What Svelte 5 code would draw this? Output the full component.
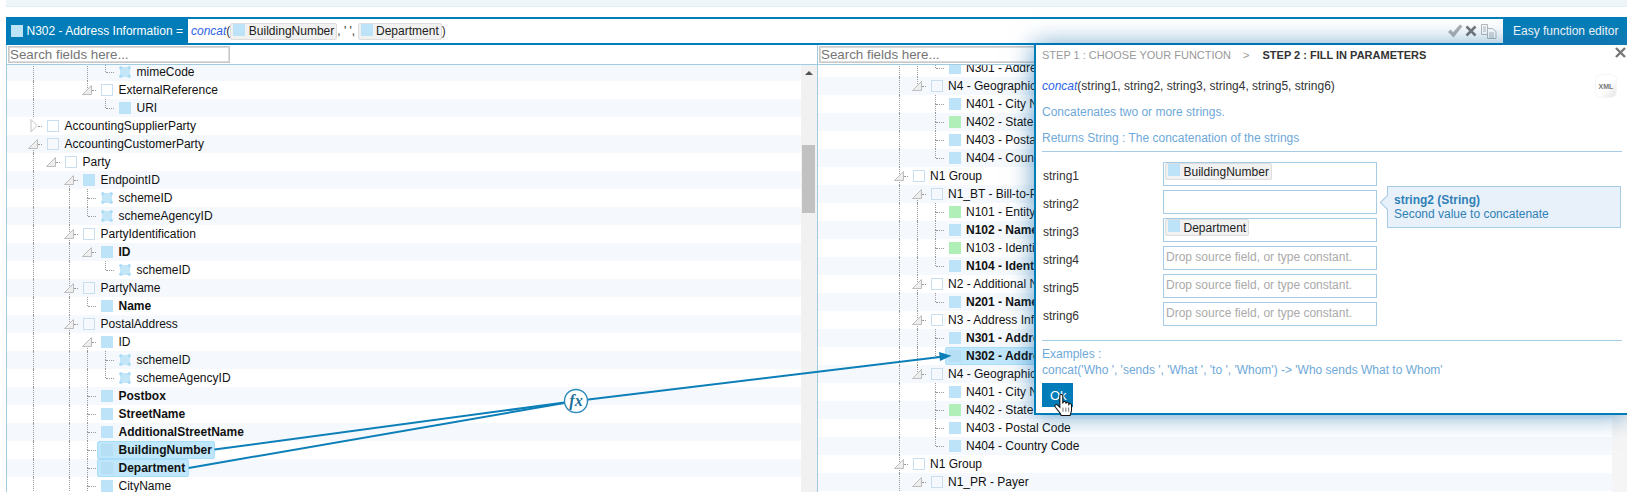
<script lang="ts">
    type Row = { level: number; conn: string; kind: string; label: string; guides: number[]; bold?: boolean; sel?: boolean };

    const n = (level: number, conn: string, kind: string, label: string, guides: number[], flag = ""): Row => ({
        level, conn, kind, label, guides,
        bold: flag.includes("b"),
        sel: flag.includes("s"),
    });

    const leftRows: Row[] = [
        n(4, "e", "a", "mimeCode", [0, 3]),
        n(3, "t", "e", "ExternalReference", [0]),
        n(4, "e", "f", "URI", [0]),
        n(0, "r", "e", "AccountingSupplierParty", []),
        n(0, "t", "e", "AccountingCustomerParty", []),
        n(1, "t", "e", "Party", [0]),
        n(2, "t", "f", "EndpointID", [0]),
        n(3, "c", "a", "schemeID", [0, 2]),
        n(3, "e", "a", "schemeAgencyID", [0, 2]),
        n(2, "t", "e", "PartyIdentification", [0]),
        n(3, "t", "f", "ID", [0, 2], "b"),
        n(4, "e", "a", "schemeID", [0, 2]),
        n(2, "t", "e", "PartyName", [0]),
        n(3, "e", "f", "Name", [0, 2], "b"),
        n(2, "t", "e", "PostalAddress", [0]),
        n(3, "t", "f", "ID", [0, 2]),
        n(4, "c", "a", "schemeID", [0, 2, 3]),
        n(4, "e", "a", "schemeAgencyID", [0, 2, 3]),
        n(3, "c", "f", "Postbox", [0, 2], "b"),
        n(3, "c", "f", "StreetName", [0, 2], "b"),
        n(3, "c", "f", "AdditionalStreetName", [0, 2], "b"),
        n(3, "c", "f", "BuildingNumber", [0, 2], "bs"),
        n(3, "c", "f", "Department", [0, 2], "bs"),
        n(3, "c", "f", "CityName", [0, 2]),
    ];

    const rightRows: Row[] = [
        n(2, "e", "f", "N301 - Address Information", [0, 1]),
        n(1, "t", "e", "N4 - Geographic Location", [0]),
        n(2, "c", "f", "N401 - City Name", [0]),
        n(2, "c", "g", "N402 - State or Province Code", [0]),
        n(2, "c", "f", "N403 - Postal Code", [0]),
        n(2, "e", "f", "N404 - Country Code", [0]),
        n(0, "t", "e", "N1 Group", []),
        n(1, "t", "e", "N1_BT - Bill-to-Party", [0]),
        n(2, "c", "g", "N101 - Entity Identifier Code", [0, 1]),
        n(2, "c", "f", "N102 - Name", [0, 1], "b"),
        n(2, "c", "g", "N103 - Identification Code Qualifier", [0, 1]),
        n(2, "e", "f", "N104 - Identification Code", [0, 1], "b"),
        n(1, "t", "e", "N2 - Additional Name Information", [0]),
        n(2, "e", "f", "N201 - Name", [0, 1], "b"),
        n(1, "t", "e", "N3 - Address Information", [0]),
        n(2, "c", "f", "N301 - Address Information", [0, 1], "b"),
        n(2, "e", "f", "N302 - Address Information", [0, 1], "bs"),
        n(1, "t", "e", "N4 - Geographic Location", [0]),
        n(2, "c", "f", "N401 - City Name", [0]),
        n(2, "c", "g", "N402 - State or Province Code", [0]),
        n(2, "c", "f", "N403 - Postal Code", [0]),
        n(2, "e", "f", "N404 - Country Code", [0]),
        n(0, "t", "e", "N1 Group", []),
        n(1, "t", "e", "N1_PR - Payer", [0]),
    ];

    const params = [
        { name: "string1", token: "BuildingNumber" },
        { name: "string2", token: "", blank: true },
        { name: "string3", token: "Department" },
        { name: "string4", token: "" },
        { name: "string5", token: "" },
        { name: "string6", token: "" },
    ];
</script>

{#snippet square(kind: string)}
    {#if kind === "a"}
        <svg class="sq" width="12" height="12" viewBox="0 0 12 12">
            <rect x="1" y="1" width="10" height="10" fill="#c4e6f9" />
            <circle cx="1.8" cy="1.8" r="1.7" fill="#aedcf5" />
            <circle cx="10.2" cy="1.8" r="1.7" fill="#aedcf5" />
            <circle cx="1.8" cy="10.2" r="1.7" fill="#aedcf5" />
            <circle cx="10.2" cy="10.2" r="1.7" fill="#aedcf5" />
        </svg>
    {:else}
        <span class="sq {kind}"></span>
    {/if}
{/snippet}

{#snippet tree(rows: Row[], tint: number)}
    {#each rows as r, i}
        <div class="row" class:tint={i % 2 === tint}>
            {#each Array(r.level) as _, g}
                <span class="indent" class:guide={r.guides.includes(g)}></span>
            {/each}
            <span
                class="conn {r.conn}"
                class:up={r.conn === "c" || r.conn === "e" || (r.conn === "t" && rows[i - 1]?.guides.includes(r.level))}
                class:down={r.conn === "c" || (r.conn === "t" && rows[i + 1]?.guides.includes(r.level))}
            >
                <span class="dash"></span>
                {#if r.conn === "t"}
                    <svg class="tri" width="11" height="11" viewBox="0 0 11 11">
                        <polygon points="9.5,0.5 9.5,9.5 0.5,9.5" fill="#eeeeee" stroke="#bdbdbd" />
                    </svg>
                {:else if r.conn === "r"}
                    <svg class="tri closed" width="8" height="14" viewBox="0 0 8 14">
                        <polygon points="1,0.5 7,6.5 1,13" fill="#ffffff" stroke="#c4c4c4" />
                    </svg>
                {/if}
            </span>
            <span class="node" class:sel={r.sel}>
                {@render square(r.kind)}
                <span class="label" class:bold={r.bold}>{r.label}</span>
            </span>
        </div>
    {/each}
{/snippet}

<div class="page">
    <div class="strip"></div>

    <div class="bar">
        <div class="title"><span class="sq f"></span>N302 - Address Information =</div>
        <div class="formula">
            <em>concat</em>(<span class="token"><span class="sq f"></span>BuildingNumber</span>, ' ', <span class="token second"><span class="sq f"></span>Department</span>)
        </div>
        <div class="actions">
            <svg class="check" width="16" height="14" viewBox="0 0 16 14">
                <path d="M1 8l2.5-2.5 2.6 2.8L13 .5l2.5 1.8L6.6 13.5z" fill="#b0b0b0" />
            </svg>
            <svg width="12" height="12" viewBox="0 0 12 12">
                <path d="M1.5 1.5l9 9M10.5 1.5l-9 9" stroke="#777777" stroke-width="2.6" fill="none" />
            </svg>
            <svg width="16" height="15" viewBox="0 0 16 15" fill="none" stroke="#b8b8b8">
                <path d="M.5.5h6v10h-6zM2 3h3M2 5h3M2 7h3" />
                <path d="M6.5 4.5h5l3.5 3v7H6.5zM8 9h5M8 11h5M8 13h5" fill="#ffffff" />
            </svg>
        </div>
        <div class="easy">Easy function editor</div>
    </div>

    <div class="panes">
        <section class="pane left">
            <div class="search"><input placeholder="Search fields here..." /></div>
            <div class="body">
                <div class="tree"><div class="rows">{@render tree(leftRows, 0)}</div></div>
                <div class="scroll"><i></i><b></b></div>
            </div>
        </section>
        <section class="pane right">
            <div class="search"><input placeholder="Search fields here..." /></div>
            <div class="body">
                <div class="tree"><div class="rows">{@render tree(rightRows, 1)}</div></div>
                <div class="scroll plain"></div>
            </div>
        </section>
    </div>

    <svg class="links" width="1627" height="492" viewBox="0 0 1627 492">
        <g fill="none" stroke="#0d7fb8" stroke-width="2">
            <line x1="214.5" y1="449.5" x2="576" y2="401" />
            <line x1="188.7" y1="468" x2="576" y2="401" />
            <line x1="576" y1="401" x2="942" y2="356.8" />
        </g>
        <polygon points="951.5,355.7 939,352 940,361" fill="#0d7fb8" />
        <circle cx="576" cy="401" r="11.5" fill="#ffffff" stroke="#2d8ab8" stroke-width="1.4" />
        <text x="576" y="406" text-anchor="middle" class="fx">fx</text>
    </svg>

    <div class="popup">
        <div class="steps">
            <span class="off">STEP 1 : CHOOSE YOUR FUNCTION</span>
            <span class="off sep">&gt;</span>
            <span class="on">STEP 2 : FILL IN PARAMETERS</span>
        </div>
        <svg class="close" width="11" height="11" viewBox="0 0 11 11">
            <path d="M1 1l9 9M10 1l-9 9" stroke="#777777" stroke-width="2.4" fill="none" />
        </svg>
        <div class="sig">
            <span><em>concat</em>(string1, string2, string3, string4, string5, string6)</span>
            <span class="xml">XML</span>
        </div>
        <p class="desc">Concatenates two or more strings.</p>
        <p class="desc">Returns String : The concatenation of the strings</p>
        <hr />
        <div class="params">
            {#each params as p}
                <label for={p.name}>{p.name}</label>
                <div class="box" id={p.name}>
                    {#if p.token}
                        <span class="token"><span class="sq f"></span>{p.token}</span>
                    {:else if !p.blank}
                        <span class="hint">Drop source field, or type constant.</span>
                    {/if}
                </div>
            {/each}
        </div>
        <hr class="low" />
        <p class="ex first">Examples :</p>
        <p class="ex">concat('Who ', 'sends ', 'What ', 'to ', 'Whom') -&gt; 'Who sends What to Whom'</p>
        <button class="ok">Ok</button>

        <div class="tip">
            <strong>string2 (String)</strong>
            <span>Second value to concatenate</span>
        </div>

        <svg class="hand" width="21" height="25" viewBox="0 0 20 24">
            <path
                d="M6.5 2.5c0-1.4 2.8-1.4 2.8 0v7.5l.3-1c.3-1.2 2.6-1.1 2.7.2v1l.2-.6c.4-1 2.5-.8 2.6.4v1l.2-.3c.5-.9 2.4-.6 2.4.7v4.8c0 2.2-1 3-1.3 5.3H7.8c-.6-2-3-4.5-5.6-7.8-1.4-1.9.7-3.4 2.2-2l2.1 2z"
                fill="#ffffff" stroke="#111111" stroke-width="1"
            />
            <path d="M9.5 14v4M12.3 14v4M15 14v4" stroke="#555555" stroke-width=".8" />
        </svg>
    </div>
</div>

<style>
    :global(body) {
        margin: 0;
    }

    .page {
        position: relative;
        width: 1627px;
        height: 492px;
        overflow: hidden;
        background: #fff;
        padding-left: 6px;
        box-sizing: border-box;
        font-family: "Liberation Sans", Arial, sans-serif;
        font-size: 12px;
        color: #222;
    }

    .strip {
        height: 6px;
        background: #eef5f9;
        border-bottom: 1px solid #e2eff7;
        margin-bottom: 10px;
    }

    /* formula bar */
    .bar {
        display: flex;
        height: 28px;
        box-sizing: border-box;
        border-top: 2px solid #007db8;
        border-bottom: 2px solid #007db8;
    }

    .sq {
        display: block;
        flex: none;
        width: 12px;
        height: 12px;
        box-sizing: border-box;
    }
    .sq.f {
        background: #bde3f8;
    }
    .sq.g {
        background: #b0efb8;
    }
    .sq.e {
        border: 1px solid #c9deee;
    }

    .title {
        display: flex;
        align-items: center;
        gap: 3.5px;
        width: 182px;
        padding-left: 5px;
        box-sizing: border-box;
        background: #007db8;
        color: #fff;
    }

    .formula {
        flex: 1;
        display: flex;
        align-items: center;
        padding-left: 3px;
        white-space: pre;
        color: #333;
    }
    em {
        color: #2a63e6;
        font-style: italic;
    }

    .token {
        display: inline-flex;
        align-items: center;
        gap: 3.5px;
        height: 17px;
        padding: 0 2px 0 2px;
        box-sizing: border-box;
        background: #f1f1f1;
        border: 1px solid #dddddd;
        border-radius: 2px;
        color: #222;
    }
    .token .sq {
        margin-top: -3px;
    }
    .token.second {
        margin-left: -1px;
    }

    .actions {
        display: flex;
        align-items: center;
        gap: 4px;
        padding-right: 6px;
    }
    .check {
        margin-right: -2px;
    }

    .easy {
        display: flex;
        align-items: center;
        width: 124px;
        padding-left: 10px;
        box-sizing: border-box;
        margin: -2px 0;
        background: linear-gradient(#007db8, #167fb6);
        color: #fff;
    }

    /* source and target trees */
    .panes {
        display: flex;
        height: 447px;
    }

    .pane {
        display: flex;
        flex-direction: column;
        box-sizing: border-box;
    }
    .pane.left {
        width: 812px;
        border-left: 1px solid #a0cbe0;
        border-right: 1px solid #a0cbe0;
    }
    .pane.right {
        flex: 1;
    }

    .search {
        height: 20px;
        box-sizing: border-box;
        padding: 1px 0 0 1px;
        border-bottom: 1px solid #a0cbe0;
    }
    .search input {
        display: block;
        width: 222px;
        height: 17px;
        box-sizing: border-box;
        padding: 0 1px;
        border: 1px solid #c8c8c8;
        outline: 1px solid #dcdcdc;
        outline-offset: -2px;
        font-family: inherit;
        font-size: 13.33px;
    }

    .body {
        flex: 1;
        display: flex;
        min-height: 0;
    }
    .tree {
        flex: 1;
        overflow: hidden;
    }
    .left .rows {
        margin-top: -2px;
    }
    .right .rows {
        margin-top: -6px;
    }

    .scroll {
        width: 16px;
        position: relative;
        background: #f1f1f1;
    }
    .scroll.plain {
        width: 15px;
        background: #f5f5f5;
    }
    .scroll i {
        position: absolute;
        left: 4px;
        top: 6px;
        border: 4px solid transparent;
        border-top: 0;
        border-bottom: 4px solid #505050;
    }
    .scroll b {
        position: absolute;
        left: 1px;
        top: 80px;
        width: 13px;
        height: 68px;
        background: #c1c1c1;
    }

    .row {
        display: flex;
        align-items: center;
        height: 18px;
        padding-left: 26px;
        white-space: nowrap;
        color: #111;
    }
    .right .row {
        padding-left: 80.5px;
    }
    .row.tint {
        background: #f5f9fd;
    }

    .indent {
        flex: none;
        width: 18px;
        height: 18px;
        box-sizing: border-box;
    }
    .indent.guide {
        border-left: 1px dotted #999;
    }

    .conn {
        flex: none;
        position: relative;
        width: 14px;
        height: 18px;
    }
    .conn.up::before,
    .conn.down::after {
        content: "";
        position: absolute;
        left: 0;
        height: 9px;
        border-left: 1px dotted #999;
    }
    .conn.up::before {
        top: 0;
    }
    .conn.down::after {
        bottom: 0;
    }
    .dash {
        position: absolute;
        left: 1px;
        top: 9px;
        width: 8px;
        border-top: 1px dotted #999;
    }
    .conn.t .dash,
    .conn.r .dash {
        left: 5px;
        width: 4px;
    }
    .tri {
        position: absolute;
        left: -5px;
        top: 4px;
        z-index: 1;
    }
    .tri.closed {
        left: -3px;
        top: 2px;
    }

    .node {
        display: inline-flex;
        align-items: center;
        gap: 5.5px;
        height: 18px;
        margin-left: -4px;
        padding: 0 3.5px 0 4px;
        box-sizing: border-box;
    }
    .node.sel {
        background: #bfe6fb;
        border: 1px solid #a8def8;
        border-radius: 2px;
        padding: 0 2.5px 0 3px;
    }
    .node.sel .sq {
        background: #b6dff6;
    }
    .bold {
        font-weight: bold;
    }

    /* link overlay */
    .links {
        position: absolute;
        left: 0;
        top: 0;
        pointer-events: none;
    }
    .fx {
        font-family: "Liberation Serif", serif;
        font-style: italic;
        font-weight: bold;
        font-size: 16px;
        fill: #1f6f9a;
    }

    /* function editor */
    .popup {
        position: absolute;
        left: 1034px;
        right: 0;
        top: 45px;
        height: 370px;
        box-sizing: border-box;
        padding: 0 5px 0 6px;
        background: #fff;
        border-left: 2px solid #007db8;
        border-bottom: 2px solid #007db8;
        box-shadow: 0 0 24px rgba(0, 95, 165, 0.6);
    }

    .steps {
        display: flex;
        line-height: 20px;
        font-size: 11px;
    }
    .off {
        color: #999;
    }
    .sep {
        margin: 0 13px 0 12px;
    }
    .on {
        color: #333;
        font-weight: bold;
    }

    .close {
        position: absolute;
        right: 1px;
        top: 2px;
    }

    .sig {
        display: flex;
        justify-content: space-between;
        align-items: center;
        height: 20px;
        margin-top: 11px;
        color: #333;
    }
    .xml {
        display: flex;
        align-items: center;
        justify-content: center;
        width: 20px;
        height: 22px;
        margin-right: 6px;
        border-radius: 5px;
        background: linear-gradient(135deg, #fff 55%, #e4e4e4);
        box-shadow: 0 0 2px #ddd;
        font-size: 7px;
        font-weight: bold;
        color: #777;
    }

    p {
        margin: 0;
    }
    .desc {
        margin-top: 6px;
        line-height: 20px;
        color: #6fa9d8;
    }

    hr {
        height: 1px;
        margin: 3px 0 0;
        border: 0;
        background: #a5cbe5;
    }
    hr.low {
        margin-top: 14px;
    }

    .params {
        display: grid;
        grid-template-columns: 121px 214px;
        grid-auto-rows: 24px;
        row-gap: 4px;
        margin-top: 10px;
    }
    label {
        padding: 2px 0 0 1px;
        line-height: 24px;
        color: #333;
    }
    .box {
        display: flex;
        align-items: flex-start;
        box-sizing: border-box;
        padding: 0 1px;
        border: 1px solid #a5cbe5;
    }
    .hint {
        line-height: 20px;
        padding-left: 1px;
        color: #aaa;
    }

    .ex {
        line-height: 16px;
        color: #6fa9d8;
    }
    .ex.first {
        margin-top: 5px;
    }

    .ok {
        display: block;
        width: 31px;
        height: 24px;
        margin-top: 5px;
        padding: 0 0 0 8px;
        border: 0;
        background: #007db8;
        color: #fff;
        font-family: inherit;
        font-size: 13px;
        text-align: left;
    }

    .tip {
        position: absolute;
        left: 351px;
        top: 141px;
        width: 234px;
        height: 42px;
        box-sizing: border-box;
        padding: 6px 6px;
        display: flex;
        flex-direction: column;
        line-height: 14px;
        background: #e8f0fa;
        border: 1px solid #a5cbe5;
        color: #2f81b5;
    }
    .tip::before {
        content: "";
        position: absolute;
        left: -6px;
        top: 10px;
        width: 10px;
        height: 10px;
        background: #e8f0fa;
        border-left: 1px solid #a5cbe5;
        border-bottom: 1px solid #a5cbe5;
        transform: rotate(45deg);
    }

    .hand {
        position: absolute;
        left: 17px;
        top: 348px;
    }
</style>
